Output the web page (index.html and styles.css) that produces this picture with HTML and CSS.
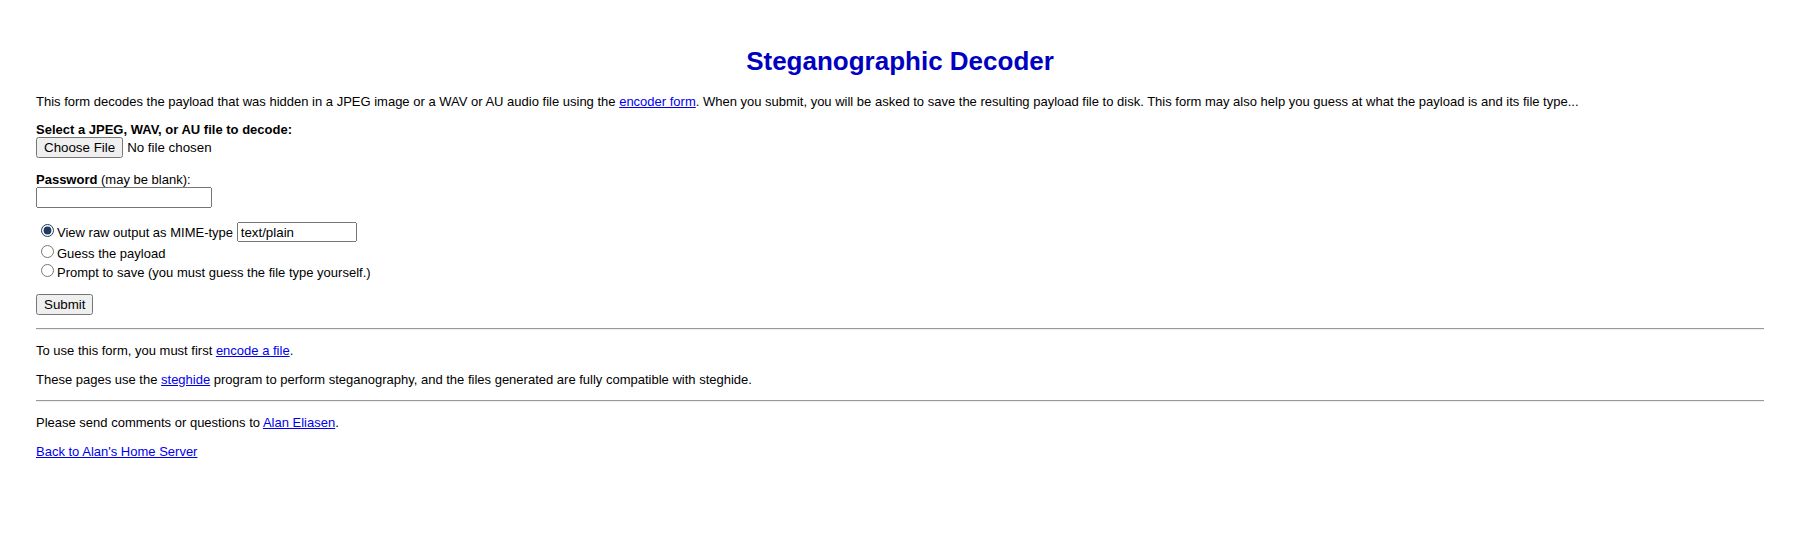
FILE: index.html
```html
<!DOCTYPE html>
<html lang="en">
<head>
<meta charset="utf-8">
<title>Steganographic Decoder</title>
<link rel="stylesheet" href="styles.css">
</head>
<body>
<div class="page">
  <h1 class="title">Steganographic Decoder</h1>
  <p class="text">This form decodes the payload that was hidden in a JPEG image or a WAV or AU audio file using the <a href="#">encoder form</a>. When you submit, you will be asked to save the resulting payload file to disk. This form may also help you guess at what the payload is and its file type...</p>
  <form class="decoder">
    <b>Select a JPEG, WAV, or AU file to decode:</b><br>
    <input type="file" class="file"><br>
    <p class="text"><b>Password</b> (may be blank):<br>
      <input type="password" class="pw"></p>
    <p class="text">
      <label class="opt"><input type="radio" name="mode" checked>View raw output as MIME-type</label> <input type="text" class="mime" value="text/plain"><br>
      <label class="opt"><input type="radio" name="mode">Guess the payload</label><br>
      <label class="opt"><input type="radio" name="mode">Prompt to save (you must guess the file type yourself.)</label>
    </p>
    <input type="submit" class="submit" value="Submit">
  </form>
  <hr class="rule">
  <p class="text">To use this form, you must first <a href="#">encode a file</a>.</p>
  <p class="text">These pages use the <a href="#">steghide</a> program to perform steganography, and the files generated are fully compatible with steghide.</p>
  <hr class="rule">
  <p class="text">Please send comments or questions to <a href="#">Alan Eliasen</a>.</p>
  <p class="text"><a href="#">Back to Alan's Home Server</a></p>
</div>
</body>
</html>
```

FILE: styles.css
```css
html, body {
  margin: 0;
  padding: 0;
  background: #ffffff;
}

.page {
  padding: 46px 36px 20px;
  font-family: "Liberation Sans", Arial, sans-serif;
  font-size: 13px;
  color: #000000;
}

.title {
  margin: 0 0 17px;
  text-align: center;
  font-size: 26px;
  font-weight: bold;
  color: #0000c0;
}

.text {
  margin: 13.333px 0;
}

.page a {
  color: #0000ee;
  text-decoration: underline;
}

.decoder {
  margin: 13.333px 0 13.333px;
}

.decoder input {
  font-family: "Liberation Sans", Arial, sans-serif;
  font-size: 13.333px;
}

.pw {
  width: 176px;
  height: 21px;
  box-sizing: border-box;
  margin: 0;
}

.mime {
  width: 120px;
  height: 20px;
  box-sizing: border-box;
  margin: 0;
}

.opt input {
  accent-color: #1e3a5c;
}

.submit {
  margin: 0;
}

.rule {
  margin: 6.667px 0;
  border: 0;
  border-top: 1px solid #9a9a9a;
  border-bottom: 1px solid #eeeeee;
  height: 0;
}
```
